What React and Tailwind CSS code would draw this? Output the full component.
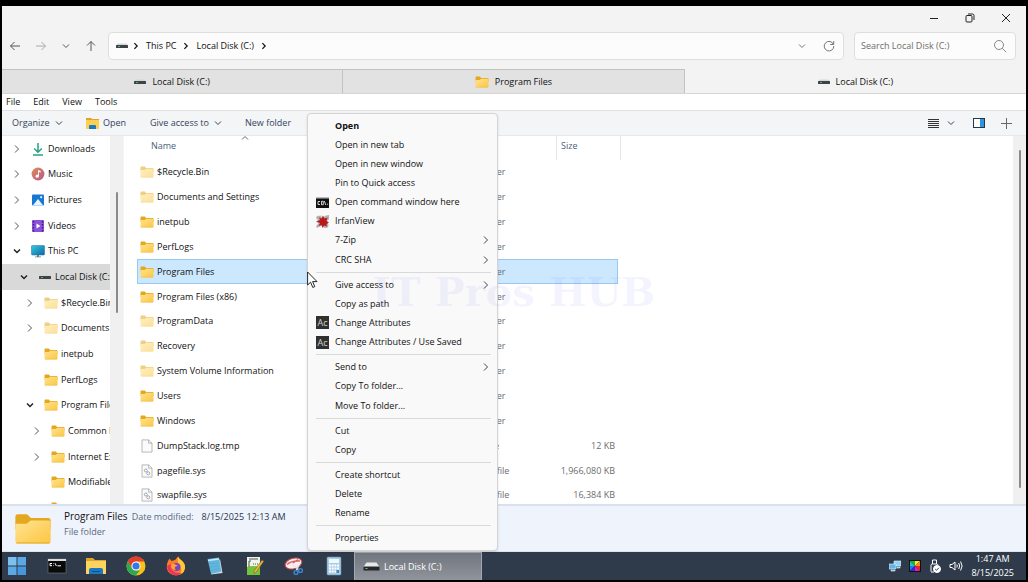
import React, { useState } from 'react';

const tree = [
  { name: 'Downloads', icon: 'downloads', level: 0, state: 'closed' },
  { name: 'Music', icon: 'music', level: 0, state: 'closed' },
  { name: 'Pictures', icon: 'pictures', level: 0, state: 'closed' },
  { name: 'Videos', icon: 'videos', level: 0, state: 'closed' },
  { name: 'This PC', icon: 'pc', level: 0, state: 'open' },
  { name: 'Local Disk (C:)', icon: 'disk', level: 1, state: 'open', selected: true },
  { name: '$Recycle.Bin', icon: 'faded', level: 2, state: 'closed' },
  { name: 'Documents and Settings', icon: 'faded', level: 2, state: 'closed' },
  { name: 'inetpub', icon: 'folder', level: 2 },
  { name: 'PerfLogs', icon: 'folder', level: 2 },
  { name: 'Program Files', icon: 'folder', level: 2, state: 'open' },
  { name: 'Common Files', icon: 'folder', level: 3, state: 'closed' },
  { name: 'Internet Explorer', icon: 'folder', level: 3, state: 'closed' },
  { name: 'ModifiableWindowsApps', icon: 'folder', level: 3 },
  { name: '', icon: 'folder', level: 3 },
];

const indents = ['pl-[9px]', 'pl-4', 'pl-[22px]', 'pl-[29px]'];

const files = [
  { name: '$Recycle.Bin', icon: 'faded', type: 'File folder', size: '' },
  { name: 'Documents and Settings', icon: 'faded', type: 'File folder', size: '' },
  { name: 'inetpub', icon: 'folder', type: 'File folder', size: '' },
  { name: 'PerfLogs', icon: 'folder', type: 'File folder', size: '' },
  { name: 'Program Files', icon: 'folder', type: 'File folder', size: '' },
  { name: 'Program Files (x86)', icon: 'folder', type: 'File folder', size: '' },
  { name: 'ProgramData', icon: 'faded', type: 'File folder', size: '' },
  { name: 'Recovery', icon: 'faded', type: 'File folder', size: '' },
  { name: 'System Volume Information', icon: 'faded', type: 'File folder', size: '' },
  { name: 'Users', icon: 'folder', type: 'File folder', size: '' },
  { name: 'Windows', icon: 'folder', type: 'File folder', size: '' },
  { name: 'DumpStack.log.tmp', icon: 'file', type: 'TMP File', size: '12 KB' },
  { name: 'pagefile.sys', icon: 'sysfile', type: 'System file', size: '1,966,080 KB' },
  { name: 'swapfile.sys', icon: 'sysfile', type: 'System file', size: '16,384 KB' },
];

const menuItems = [
  { label: 'Open', bold: true },
  { label: 'Open in new tab' },
  { label: 'Open in new window' },
  { label: 'Pin to Quick access' },
  { label: 'Open command window here', icon: 'cmd' },
  { label: 'IrfanView', icon: 'irfan' },
  { label: '7-Zip', sub: true },
  { label: 'CRC SHA', sub: true },
  null,
  { label: 'Give access to', sub: true },
  { label: 'Copy as path' },
  { label: 'Change Attributes', icon: 'ac' },
  { label: 'Change Attributes / Use Saved', icon: 'ac' },
  null,
  { label: 'Send to', sub: true },
  { label: 'Copy To folder...' },
  { label: 'Move To folder...' },
  null,
  { label: 'Cut' },
  { label: 'Copy' },
  null,
  { label: 'Create shortcut' },
  { label: 'Delete' },
  { label: 'Rename' },
  null,
  { label: 'Properties' },
];

const Chevron = ({ dir = 'down', className = '' }) => {
  const paths = { down: 'M2 3.5 5 6.5 8 3.5', right: 'M3 1.5 6.5 5 3 8.5', up: 'M2 6.5 5 3.5 8 6.5' };
  return (
    <svg viewBox="0 0 10 10" className={`shrink-0 ${className}`} fill="none" stroke="currentColor">
      <path d={paths[dir]} />
    </svg>
  );
};

const Folder = ({ className = 'w-3.5 h-3' }) => (
  <svg viewBox="0 0 14 12" className={`shrink-0 ${className}`} preserveAspectRatio="none">
    <defs>
      <linearGradient id="folderFront" x1="0" y1="0" x2="1" y2="1">
        <stop offset="0" stopColor="#ffe393" />
        <stop offset="1" stopColor="#fcc63f" />
      </linearGradient>
    </defs>
    <path d="M.5 1.4Q.5.5 1.4.5h3.4l1.4 1.400h6.4q.9 0 .9.9V6H.5z" fill="#e3a81f" />
    <path d="M.5 4h4.2l1.4-1.2h6.6q.8 0 .8.8v7q0 .9-.9.9H1.4q-.9 0-.9-.9z" fill="url(#folderFront)" />
    <path d="M.8 11.2h12.4" stroke="#e5b445" strokeWidth=".4" />
  </svg>
);

const Disk = ({ className = 'w-3 h-2' }) => (
  <svg viewBox="0 0 12 8" className={`shrink-0 ${className}`}>
    <path d="M1.5 1.5h9L12 3.500H0z" fill="#d4d6d8" />
    <rect x="0" y="3" width="12" height="3" rx=".5" fill="#3e4347" />
    <rect x="2" y="4" width="2" height="1" fill="#4fb06d" />
  </svg>
);

const Icon = ({ name }) => {
  switch (name) {
    case 'folder':
      return <Folder />;
    case 'faded':
      return <Folder className="w-3.5 h-3 opacity-55" />;
    case 'disk':
      return <Disk />;
    case 'downloads':
      return (
        <svg viewBox="0 0 14 14" className="w-3.5 h-3.5 shrink-0" fill="none" stroke="#27a283" strokeWidth="1.5">
          <path d="M7 1v9M3.2 6.5 7 10.2l3.8-3.7M2 13h10" />
        </svg>
      );
    case 'music':
      return (
        <svg viewBox="0 0 14 14" className="w-3.5 h-3.5 shrink-0">
          <defs>
            <linearGradient id="music" x1="0" y1="0" x2="1" y2="1">
              <stop offset="0" stopColor="#e58a53" />
              <stop offset="1" stopColor="#b25a8e" />
            </linearGradient>
          </defs>
          <circle cx="7" cy="7" r="6.4" fill="url(#music)" />
          <path d="M7 9V3l2.6.9v1.6L7.800 5v4" fill="#fff" />
          <circle cx="6.2" cy="9.2" r="1.6" fill="#fff" />
        </svg>
      );
    case 'pictures':
      return (
        <svg viewBox="0 0 14 14" className="w-3.5 h-3.5 shrink-0">
          <rect x="1" y="1.5" width="12" height="11" rx="1" fill="#1877d2" />
          <path d="M1.8 12.5 7 6l5.2 6.5z" fill="#e8f4ff" />
          <rect x="9.3" y="3.3" width="1.8" height="1.8" fill="#fff" />
        </svg>
      );
    case 'videos':
      return (
        <svg viewBox="0 0 14 14" className="w-3.5 h-3.5 shrink-0">
          <rect x="1" y="1" width="12" height="12" rx="1" fill="#8b52d8" />
          <path d="M2.5 2v10.500M11.500 2v10.500" stroke="#3e1c80" strokeWidth="1.4" strokeDasharray="1.6 1.4" />
          <path d="m5.500 4.500 4 2.500-4 2.500z" fill="#fff" />
        </svg>
      );
    case 'pc':
      return (
        <svg viewBox="0 0 14 14" className="w-3.5 h-3.5 shrink-0">
          <defs>
            <linearGradient id="screen" x1="0" y1="0" x2="1" y2="1">
              <stop offset="0" stopColor="#35c8dd" />
              <stop offset="1" stopColor="#0c67a8" />
            </linearGradient>
          </defs>
          <rect x=".5" y="1.5" width="13" height="9.5" rx=".8" fill="url(#screen)" stroke="#27718f" strokeWidth=".5" />
          <path d="M6 11h2v1.500h2v.8H4v-.8h2z" fill="#5f7f93" />
        </svg>
      );
    case 'file':
    case 'sysfile':
      return (
        <svg viewBox="0 0 14 14" className="w-3.5 h-3.5 shrink-0" fill="#fbfbfb" stroke="#a8a8a8" strokeWidth=".8">
          <path d="M2 .9h6.600L12 4.200v8.900H2zM8.600.9v3.300H12" />
          {name === 'sysfile' && (
            <g fill="none" stroke="#8d9499">
              <circle cx="5.8" cy="6.5" r="1.5" />
              <circle cx="8.3" cy="9.3" r="1.5" />
            </g>
          )}
        </svg>
      );
    case 'cmd':
      return (
        <svg viewBox="0 0 13 11" className="w-[13px] h-[11px]">
          <rect width="13" height="11" fill="#111" />
          <rect width="13" height="1.5" fill="#b9bcc0" />
          <path d="M4 4.500H2v3h2M5.500 4.300v3.400h1.800V4.300zM8.300 4l1.500 4M11 7.200h1" fill="none" stroke="#fff" strokeWidth=".8" />
        </svg>
      );
    case 'irfan':
      return (
        <svg viewBox="0 0 13 13" className="w-[13px] h-[13px]">
          <path d="M0 3 1 1l4-.5L6 3l4-2.500 3-.5v4l-2 2 1.500 4-.5 2.500-4 .5-2-2.500L1 13l-1-2 2.500-2.500L0 6.500l2-1.500z" fill="#b3b0b0" />
          <path d="M3 2.500 5.500 3.500 7 .5l1.500 3 3-1L10.500 6l2.500 1.500-2.500 1.500L11 11.500 8 10.500 6.500 13 5.500 10 2.500 11 4 8 .5 6.500 4 5z" fill="#b81a1a" />
        </svg>
      );
    case 'ac':
      return (
        <span className="flex h-[13px] w-[13px] items-center justify-center bg-[#303030] leading-none text-[#d0d0d0]">
          Ac
        </span>
      );
    default:
      return null;
  }
};

const Explorer = () => (
  <svg viewBox="0 0 20 20" className="w-5 h-5">
    <path d="M0 2h7l2 2h11v5H0z" fill="#e0a526" />
    <path d="M0 5h20v13H0z" fill="#fdd462" />
    <path d="M3 18v-4q0-2 2-2h10q2 0 2 2v4z" fill="#1b79bd" />
    <path d="M6 15.500h8" stroke="#0c4e85" />
  </svg>
);

const taskIcons = [
  {
    label: 'Start',
    art: (
      <svg viewBox="0 0 20 20" className="w-5 h-5" fill="#5aa9e6">
        <path d="M1 1h8.500v8.500H1z" fill="#7cc0ef" />
        <path d="M10.500 1H19v8.500h-8.500zM1 10.500h8.500V19H1z" />
        <path d="M10.500 10.500H19V19h-8.500z" fill="#4795dc" />
      </svg>
    ),
  },
  {
    label: 'Command Prompt',
    art: (
      <svg viewBox="0 0 20 20" className="w-5 h-5">
        <rect x="1" y="3" width="18" height="14" fill="#0a0a0a" stroke="#777" strokeWidth=".6" />
        <path d="M1 3h18v2H1z" fill="#d7d9db" />
        <path d="M5 7.500H3v2.200h2M6.500 7.500v.5m0 1v.5M8 7.200l1.400 2.800M10.500 9.800H14" fill="none" stroke="#fff" />
      </svg>
    ),
  },
  { label: 'File Explorer', art: <Explorer /> },
  {
    label: 'Chrome',
    art: (
      <svg viewBox="0 0 20 20" className="w-5 h-5">
        <circle cx="10" cy="10" r="9.500" fill="#fbc116" />
        <path d="M1.800 5.200A9.500 9.500 0 0 1 18.300 5.500H10L6.100 12.200z" fill="#e33b2e" />
        <path d="M1.800 5.200 6.100 12.200 10 14.500h3.900L9.700 19.500A9.500 9.500 0 0 1 1.800 5.200z" fill="#2da94f" />
        <circle cx="10" cy="10" r="4.600" fill="#fff" />
        <circle cx="10" cy="10" r="3.600" fill="#3478e8" />
      </svg>
    ),
  },
  {
    label: 'Firefox',
    art: (
      <svg viewBox="0 0 20 20" className="w-5 h-5">
        <path d="M2 5 3.500 2.500 5.500 5 9 4l3-3.500q1 2 3 3.500 4.500 3.500 4 8-1 7-9 7.500-8-.5-9.200-7.500Q.5 8 2 5z" fill="#ff7b25" />
        <path d="M12 .5q1 2 3 3.500 4.500 3.500 4 8-.8 5-5 6.500 3-5-1-10-2-3-1-8z" fill="#ffc934" />
        <path d="M1 10q1 8 8.500 9.300 3.500 0 6.500-2.500-7 1-10-3-2-3-1-6z" fill="#f0335c" />
        <circle cx="10.500" cy="11" r="4" fill="#7346c4" />
        <path d="M5 8q3-1 5 1l2 .5-3 1.500q-1 2 1.500 3-4 .5-5-2.500z" fill="#ffa22e" />
      </svg>
    ),
  },
  {
    label: 'Notepad',
    art: (
      <svg viewBox="0 0 20 20" className="w-5 h-5">
        <path d="M6 18.500 17.500 17 15 3z" fill="#d9dee2" />
        <path d="M2.500 3 14 1.500l2.500 14L6 18z" fill="#61b6dd" />
        <path d="m3 4.500 11-1.500" stroke="#c7eaf8" strokeWidth="1.500" />
        <path d="m5 8 8-1.200M5.500 11l8-1.200M6.200 14l8-1.200" stroke="#55a5cf" strokeWidth=".6" />
      </svg>
    ),
  },
  {
    label: 'Text editor',
    art: (
      <svg viewBox="0 0 20 20" className="w-5 h-5">
        <path d="M2 1h13v18H2z" fill="#eef4e8" />
        <path d="M2 11q6-2 13 0v8H2z" fill="#74c13c" />
        <path d="M4 5v6M4 5h2M8 8h1M10 8h1M12 8h1M4 3h9" stroke="#555" fill="none" />
        <path d="m9 15 8-11 1.800 1.200-7.600 11L9 17.500z" fill="#e9b53b" stroke="#6c541f" strokeWidth=".5" />
      </svg>
    ),
  },
  {
    label: 'Snipping Tool',
    art: (
      <svg viewBox="0 0 20 20" className="w-5 h-5" fill="none">
        <ellipse cx="9.500" cy="7.500" rx="8.500" ry="5.200" transform="rotate(-16 9.500 7.500)" fill="#f7eeee" stroke="#cf4d52" />
        <path d="M3 8.500q4-4 13-3.500M9 7l5-3.500" stroke="#d9656a" strokeWidth="1.400" />
        <path d="m8 8 7 6M15 9l-3 6" stroke="#dfe8ee" strokeWidth="1.300" />
        <circle cx="12" cy="16.500" r="1.900" stroke="#3a88d4" strokeWidth="1.400" />
        <circle cx="16.500" cy="14.500" r="1.900" stroke="#3a88d4" strokeWidth="1.400" />
      </svg>
    ),
  },
  {
    label: 'Calculator',
    art: (
      <svg viewBox="0 0 20 20" className="w-5 h-5">
        <rect x="3" y="1" width="14" height="18" rx="1" fill="#a9cde5" stroke="#658ba8" strokeWidth=".6" />
        <rect x="5" y="3" width="10" height="4" fill="#eef8ff" />
        <path d="M5 9.500h10M5 12.500h10M5 15.500h10" stroke="#fff" strokeWidth="2" strokeDasharray="2 .67" />
        <rect x="12.500" y="14" width="2.500" height="3" fill="#3c89bf" />
      </svg>
    ),
  },
];

const TitleBar = () => (
  <div className="flex h-6 items-center justify-end pr-0.5 text-[#222]">
    <button aria-label="Minimize" className="flex w-9 justify-center">
      <svg viewBox="0 0 10 10" className="w-2.5 h-2.5" stroke="currentColor"><path d="M1 5.500h8" /></svg>
    </button>
    <button aria-label="Restore" className="flex w-9 justify-center">
      <svg viewBox="0 0 10 10" className="w-2.5 h-2.5" fill="none" stroke="currentColor">
        <rect x="1" y="2.500" width="6" height="6.500" rx="1" />
        <path d="M3 1h4.500Q9 1 9 2.500V7" />
      </svg>
    </button>
    <button aria-label="Close" className="flex w-9 justify-center">
      <svg viewBox="0 0 10 10" className="w-2.5 h-2.5" stroke="currentColor"><path d="m1 1 8 8M9 1 1 9" /></svg>
    </button>
  </div>
);

const AddressBar = () => {
  const [search, setSearch] = useState('');

  return (
    <div className="flex items-center pr-2.5 pt-0.5">
      <div className="flex w-[106px] shrink-0 items-center gap-3.5 pl-[7px] text-[#555]">
        <button aria-label="Back">
          <svg viewBox="0 0 12 12" className="w-3 h-3" fill="none" stroke="currentColor"><path d="M11 6H1.500M5.500 2l-4 4 4 4" /></svg>
        </button>
        <button aria-label="Forward" className="text-[#aaa]">
          <svg viewBox="0 0 12 12" className="w-3 h-3" fill="none" stroke="currentColor"><path d="M1 6h9.500M6.500 2l4 4-4 4" /></svg>
        </button>
        <button aria-label="Recent locations"><Chevron className="w-2.5 h-2.5" /></button>
        <button aria-label="Up">
          <svg viewBox="0 0 12 12" className="w-3 h-3" fill="none" stroke="currentColor"><path d="M6 11V1.500M2 5.500l4-4 4 4" /></svg>
        </button>
      </div>
      <div className="flex h-7 flex-1 items-center rounded border border-[#dedede] bg-[#fcfcfc] pl-[7px] pr-2">
        <Disk />
        <Chevron dir="right" className="mx-1 w-2 h-2 stroke-[1.5]" />
        <a href="#pc" className="ml-0.5">This PC</a>
        <Chevron dir="right" className="mx-1.5 w-2 h-2 stroke-[1.5]" />
        <a href="#c">Local Disk (C:)</a>
        <Chevron dir="right" className="ml-1.5 w-2 h-2 stroke-[1.5]" />
        <button aria-label="Address history" className="ml-auto mr-4 text-[#777]"><Chevron className="w-2.5 h-2.5" /></button>
        <button aria-label="Refresh" className="text-[#777]">
          <svg viewBox="0 0 12 12" className="w-3 h-3" fill="none" stroke="currentColor"><path d="M10.500 4.500A4.800 4.800 0 1 0 10.800 6M10.700 1v3.500H7.200" /></svg>
        </button>
      </div>
      <label className="ml-2.5 flex h-7 w-[162px] items-center rounded border border-[#dedede] bg-[#fcfcfc] pl-1.5 pr-2">
        <input
          type="text"
          aria-label="Search Local Disk (C:)"
          placeholder="Search Local Disk (C:)"
          value={search}
          onChange={(e) => setSearch(e.target.value)}
          className="min-w-0 flex-1 bg-transparent outline-none placeholder:text-[#6d6d6d]"
        />
        <svg viewBox="0 0 14 14" className="w-3.5 h-3.5" fill="none" stroke="#888"><circle cx="6" cy="6" r="4.500" /><path d="m9.200 9.200 4 4" /></svg>
      </label>
    </div>
  );
};

const Tabs = () => (
  <div className="mt-[9px] grid h-[25px] grid-cols-3 border-b border-[#d6d6d6]">
    <button className="flex items-center justify-center gap-1.5 border-r border-t border-[#c2c2c2] bg-[#e2e2e2]">
      <Disk /> Local Disk (C:)
    </button>
    <button className="flex items-center justify-center gap-1.5 border-r border-t border-[#c2c2c2] bg-[#e2e2e2]">
      <Folder /> Program Files
    </button>
    <button className="flex items-center justify-center gap-1.5 border-t border-transparent">
      <Disk /> Local Disk (C:)
    </button>
  </div>
);

const Toolbar = () => (
  <div className="flex h-[26px] shrink-0 items-center border-b border-t border-b-[#e6e8e9] border-t-[#dfe2e3] bg-[#f3f5f6] pl-2.5 pr-3.5 text-[#33435c]">
    <button className="flex w-[74px] items-center gap-1">Organize <Chevron className="w-2.5 h-2.5" /></button>
    <button className="flex w-16 items-center gap-1">
      <svg viewBox="0 0 13 12" className="w-[13px] h-3">
        <path d="M0 1h5l1 1h7v3H0z" fill="#e0a526" />
        <path d="M0 3h13v9H0z" fill="#fccf55" />
        <path d="M3 12V9q0-1 1-1h5q1 0 1 1v3z" fill="#1b79bd" />
      </svg>
      Open
    </button>
    <button className="flex w-[95px] items-center gap-1">Give access to <Chevron className="w-2.5 h-2.5" /></button>
    <button>New folder</button>
    <button aria-label="View" className="ml-auto text-[#333]">
      <svg viewBox="0 0 11 9" className="w-[11px] h-[9px]" stroke="currentColor"><path d="M0 .5h11M0 2.500h11M0 4.500h11M0 6.500h11M0 8.500h11" /></svg>
    </button>
    <button aria-label="More view options" className="ml-[7px]"><Chevron className="w-2.5 h-2.5" /></button>
    <button aria-label="Preview pane" className="ml-[17px]">
      <svg viewBox="0 0 12 10" className="w-3 h-2.5">
        <rect x=".5" y=".5" width="11" height="9" fill="#fff" stroke="#25364a" />
        <rect x="7" y="1" width="4" height="8" fill="#2e94db" />
      </svg>
    </button>
    <button aria-label="Add" className="ml-4 text-[#666]">
      <svg viewBox="0 0 11 11" className="w-[11px] h-[11px]" stroke="currentColor"><path d="M5.500 0v11M0 5.500h11" /></svg>
    </button>
  </div>
);

const NavTree = () => (
  <nav className="w-[108px] shrink-0 overflow-hidden">
    <ul className="grid h-[385px] auto-rows-fr">
      {tree.map((node, i) => (
        <li
          key={i}
          className={`flex items-center gap-2 whitespace-nowrap ${indents[node.level]} ${node.selected ? 'bg-[#d9d9d9]' : ''}`}
        >
          <span className="flex w-3 shrink-0 justify-center">
            {node.state && (
              <Chevron
                dir={node.state === 'open' ? 'down' : 'right'}
                className={node.state === 'open' ? 'w-2.5 h-2.5 stroke-[1.5] text-[#222]' : 'w-2.5 h-2.5 text-[#555]'}
              />
            )}
          </span>
          <span className="flex items-center gap-[3px]">
            <span className="flex w-3.5 shrink-0 justify-center">
              <Icon name={node.icon} />
            </span>
            {node.name}
          </span>
        </li>
      ))}
    </ul>
  </nav>
);

const FileList = () => {
  const [selected, setSelected] = useState('Program Files');

  return (
    <main className="flex-1 overflow-hidden border-l border-[#f4f4f4] pl-[13px]">
      <table className="w-[484px] table-fixed border-separate border-spacing-0">
        <colgroup>
          <col />
          <col className="w-[98px]" />
          <col className="w-[65px]" />
        </colgroup>
        <thead>
          <tr className="h-6 text-left text-[#4c607a]">
            <th className="p-0 pb-1 pl-3.5 font-normal">Name</th>
            <th className="p-0 pb-1 pl-2 font-normal">Type</th>
            <th className="border-l border-r border-[#e5e5e5] p-0 pb-1 pl-1 font-normal">Size</th>
          </tr>
        </thead>
      </table>
      <div className="h-[348px] w-[481px]">
        <table className="h-full w-full table-fixed border-separate border-spacing-0">
          <colgroup>
            <col />
            <col className="w-[98px]" />
            <col className="w-16" />
          </colgroup>
          <tbody>
            {files.map((file) => {
              const edge = file.name === selected ? 'border-[#99c9ee] bg-[#cce8ff]' : 'border-transparent';
              return (
                <tr key={file.name} onClick={() => setSelected(file.name)}>
                  <td className={`border-y border-l p-0 pl-0.5 ${edge}`}>
                    <span className="flex items-center gap-[3px]">
                      <Icon name={file.icon} />
                      {file.name}
                    </span>
                  </td>
                  <td className={`border-y p-0 pl-2 text-[#6d6d6d] ${edge}`}>{file.type}</td>
                  <td className={`whitespace-nowrap border-y border-r p-0 pr-0.5 text-right text-[#6d6d6d] ${edge}`}>{file.size}</td>
                </tr>
              );
            })}
          </tbody>
        </table>
      </div>
    </main>
  );
};

const DetailsPane = () => (
  <footer className="flex h-[47px] shrink-0 gap-3 border-t-2 border-[#d8e1ee] bg-[#eff3fb] pl-3 pt-[3px]">
    <Folder className="mt-1 w-[38px] h-8" />
    <div className="leading-[15px]">
      <p className="flex gap-1">
        <span className="text-[10px]">Program Files</span>
        <span className="text-[#5a6b82]">Date modified:</span>
        <span className="ml-1 text-[#26374f]">8/15/2025 12:13 AM</span>
      </p>
      <p className="text-[#5a6b82]">File folder</p>
    </div>
  </footer>
);

const Taskbar = () => (
  <div className="flex h-[29px] shrink-0 items-center border-t border-[#dfe3ea] bg-[#2f3b4a] text-white">
    <div className="ml-[5px] flex w-[337px] shrink-0 justify-between">
      {taskIcons.map((item) => (
        <button key={item.label} aria-label={item.label} className="w-5">{item.art}</button>
      ))}
    </div>
    <button className="ml-2.5 flex h-full w-32 items-center gap-1 border border-b-0 border-[#a3a8b0] bg-linear-to-b from-[#71767f] to-[#90949b] pl-2">
      <svg viewBox="0 0 17 10" className="w-[17px] h-2.5">
        <path d="M3.500.5h10l3 4.500H.5z" fill="#e8e8e8" />
        <rect x=".5" y="4.500" width="16" height="4" rx=".5" fill="#26292c" />
        <rect x="2.500" y="6" width="2" height="1" fill="#57cf7c" />
      </svg>
      Local Disk (C:)
    </button>
    <div className="ml-auto flex items-center gap-2 pr-3">
      <svg viewBox="0 0 12 12" className="w-3 h-3">
        <path d="M5 1h7v5H5z" fill="#8ed0f5" stroke="#e7f6ff" strokeWidth=".6" />
        <path d="M0 4h7v5H0zM2 10h4v1H2zM8 7h3v1H8z" fill="#62b4e8" stroke="#e7f6ff" strokeWidth=".6" />
      </svg>
      <svg viewBox="0 0 12 12" className="w-3 h-3">
        <path d="M0 0h12v12H0z" fill="#111" />
        <path d="M6 6 1 1h5z" fill="#18b83c" />
        <path d="M6 6 1 1v5z" fill="#19c8c0" />
        <path d="M6 6V1h5z" fill="#f6ea20" />
        <path d="m6 6 5-5v5z" fill="#f78a18" />
        <path d="M6 6h5v5z" fill="#f02424" />
        <path d="M6 6v5h5z" fill="#ec1db0" />
        <path d="M6 6H1v5z" fill="#2179ec" />
        <path d="m6 6-5 5h5z" fill="#3922d8" />
      </svg>
      <svg viewBox="0 0 12 14" className="w-3 h-3.5" fill="none" stroke="#fff">
        <path d="M3.500 5V1h4v4M2 12.500V6.500Q2 5 3.500 5h4Q9 5 9 6.500M2 13h3" />
        <circle cx="8" cy="10" r="3.500" fill="#fff" />
        <path d="m6.200 10 1.300 1.300 2.300-2.500" stroke="#2f3b4a" />
      </svg>
      <svg viewBox="0 0 14 12" className="w-3.5 h-3" fill="none" stroke="#fff">
        <path d="M1 4.500h2L6 2v8L3 7.500H1zM7.800 4.500q1 1.500 0 3M9.700 3q2 3 0 6M11.600 1.500q3 4.500 0 9" />
      </svg>
      <time className="text-center leading-[14px]">
        1:47 AM
        <br />
        8/15/2025
      </time>
    </div>
  </div>
);

const ContextMenu = () => (
  <div
    role="menu"
    className="absolute left-[307px] top-[113px] flex h-[438px] w-[191px] flex-col rounded border border-[#d4d4d4] bg-[#f9f9f9] pb-0.5 pl-2 pr-1.5 pt-0.5 shadow-sm"
  >
    {menuItems.map((item, i) =>
      item ? (
        <button
          key={i}
          role="menuitem"
          className={`flex flex-1 items-center text-left leading-4 ${item.bold ? 'font-bold' : ''}`}
        >
          <span className="w-[19px] shrink-0">{item.icon && <Icon name={item.icon} />}</span>
          <span className="flex-1 whitespace-nowrap">{item.label}</span>
          {item.sub && <Chevron dir="right" className="w-2.5 h-2.5 text-[#444]" />}
        </button>
      ) : (
        <div key={i} role="separator" className="flex h-1.5 items-center">
          <span className="h-px w-full bg-[#d9d9d9]" />
        </div>
      )
    )}
  </div>
);

const App = () => {
  return (
    <div className="relative flex h-screen flex-col overflow-hidden bg-black px-0.5 pb-0.5 pt-1.5 font-['Open_Sans','Noto_Sans',sans-serif] text-[9px] leading-4 text-[#111]">
      <header className="shrink-0 bg-[#f3f3f3]">
        <TitleBar />
        <AddressBar />
        <Tabs />
      </header>
      <div className="flex h-4 shrink-0 items-center gap-[13px] bg-white pl-1">
        <button>File</button>
        <button>Edit</button>
        <button>View</button>
        <button>Tools</button>
      </div>
      <Toolbar />
      <div className="flex min-h-0 flex-1 bg-white">
        <NavTree />
        <div className="w-[13px] shrink-0 bg-[#f0f0f0] pl-1.5 pt-14">
          <div className="h-[121px] w-0.5 rounded bg-[#8a8a8a]" />
        </div>
        <FileList />
        <div className="flex w-[13px] shrink-0 justify-center bg-[#f0f0f0] pb-4 pt-3.5">
          <div className="w-0.5 rounded bg-[#8a8a8a]" />
        </div>
      </div>
      <DetailsPane />
      <Taskbar />

      <ContextMenu />

      {/* sort arrow sits on the column header edge */}
      <Chevron dir="up" className="absolute left-60 top-[133px] w-2.5 h-2.5 text-[#666]" />

      <div className="pointer-events-none absolute left-[372px] top-[268px] whitespace-nowrap font-['DejaVu_Serif',serif] text-[40px] font-bold leading-[48px] text-[#5050ff]/7">
        IT Pros HUB
      </div>

      {/* mouse pointer */}
      <svg viewBox="0 0 11 18" className="pointer-events-none absolute left-[307px] top-[271px] h-[18px] w-[11px]">
        <path d="M.6 1v13l3-2.800 2.200 5.300 2-.9-2.200-5H10z" fill="#fff" stroke="#111" strokeWidth=".9" />
      </svg>
    </div>
  );
};

export default App;
